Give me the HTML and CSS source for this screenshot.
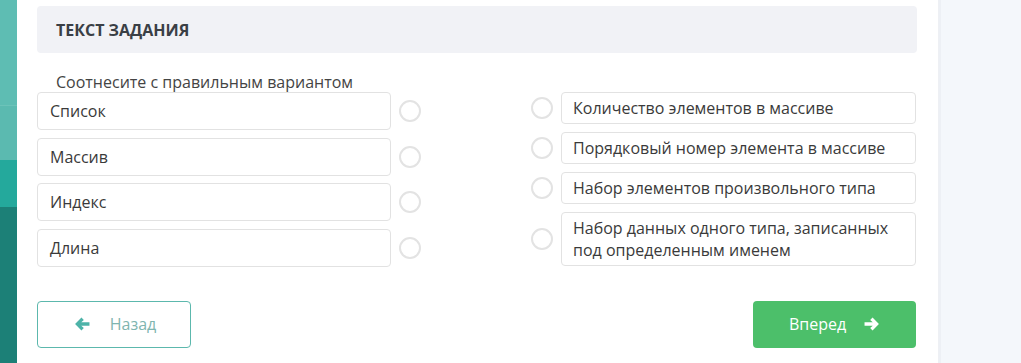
FILE: index.html
```html
<!DOCTYPE html>
<html>
<head>
  <title>Задание</title>
  <link rel="stylesheet" href="styles.css">
</head>
<body>
  <div class="layout">
    <div class="sidebar">
      <div class="side-a"></div>
      <div class="side-b"></div>
      <div class="side-c"></div>
      <div class="side-d"></div>
    </div>

    <div class="card">
      <div class="task-header">ТЕКСТ ЗАДАНИЯ</div>
      <p class="task-text">Соотнесите с правильным вариантом</p>

      <div class="match">
        <div class="col-left">
          <div class="row-left"><div class="item">Список</div><span class="dot"></span></div>
          <div class="row-left"><div class="item">Массив</div><span class="dot"></span></div>
          <div class="row-left"><div class="item">Индекс</div><span class="dot"></span></div>
          <div class="row-left"><div class="item">Длина</div><span class="dot"></span></div>
        </div>
        <div class="col-right">
          <div class="row-right"><span class="dot"></span><div class="answer">Количество элементов в массиве</div></div>
          <div class="row-right"><span class="dot"></span><div class="answer">Порядковый номер элемента в массиве</div></div>
          <div class="row-right"><span class="dot"></span><div class="answer">Набор элементов произвольного типа</div></div>
          <div class="row-right"><span class="dot"></span><div class="answer">Набор данных одного типа, записанных под определенным именем</div></div>
        </div>
      </div>

      <div class="nav">
        <button type="button" class="btn-back">
          <svg width="16" height="14" viewBox="0 0 15 13"><path d="M7 0.5 L1 6.5 L7 12.5 L9.2 10.3 L6.8 8.2 H14.5 V4.8 H6.8 L9.2 2.7 Z" fill="#4db3a8"/></svg>
          <span>Назад</span>
        </button>
        <button type="button" class="btn-next">
          <span>Вперед</span>
          <svg width="16" height="14" viewBox="0 0 15 13"><path d="M8 0.5 L14 6.5 L8 12.5 L5.8 10.3 L8.2 8.2 H0.5 V4.8 H8.2 L5.8 2.7 Z" fill="#fff"/></svg>
        </button>
      </div>
    </div>

    <div class="aside"></div>
  </div>
</body>
</html>
```

FILE: styles.css
```css
body {
  font-family: "Open Sans", "DejaVu Sans", sans-serif;
  margin: 0;
  padding: 0;
  background-color: #f4f7fb;
  color: #333;
}

.layout {
  display: flex;
  height: 363px;
  overflow: hidden;
}

.sidebar {
  width: 17px;
  display: flex;
  flex-direction: column;
}

.side-a {
  height: 105px;
  background-color: #5ebdb3;
  border-bottom: 1px solid #6cc3b9;
}

.side-b {
  height: 54px;
  background-color: #5bbab0;
}

.side-c {
  height: 47px;
  background-color: #24a99c;
}

.side-d {
  flex: 1;
  background-color: #1c8077;
}

.card {
  width: 880px;
  background-color: #fff;
  padding: 6px 21px 0 20px;
  border-right: 1px solid #eef0f4;
}

.task-header {
  background-color: #f1f2f6;
  border-radius: 4px;
  height: 47px;
  line-height: 48px;
  padding-left: 19px;
  font-size: 16px;
  font-weight: 700;
  color: #3a3f45;
}

.task-text {
  margin: 18px 0 0 19px;
  font-size: 16px;
  line-height: 22px;
  color: #444;
}

.match {
  display: flex;
  justify-content: space-between;
  margin-top: -1px;
}

.col-left {
  display: flex;
  flex-direction: column;
  gap: 7.5px;
}

.row-left {
  display: flex;
  align-items: center;
  gap: 8px;
}

.item {
  width: 340px;
  height: 36px;
  line-height: 37px;
  padding-left: 12px;
  border: 1px solid #e2e2e2;
  border-radius: 4px;
  font-size: 16px;
  color: #3a3a3a;
}

.col-right {
  display: flex;
  flex-direction: column;
  gap: 8px;
  width: 385px;
  margin-right: 1px;
}

.row-right {
  display: flex;
  align-items: center;
  gap: 8px;
}

.answer {
  flex: 1;
  padding: 0 11px;
  box-sizing: border-box;
  border: 1px solid #e2e2e2;
  border-radius: 4px;
  font-size: 16px;
  line-height: 22px;
  color: #3a3a3a;
  display: flex;
  align-items: center;
}

.row-right .answer {
  height: 32px;
}

.row-right:last-child .answer {
  height: 54px;
  padding-right: 20px;
}

.dot {
  width: 18px;
  height: 18px;
  border: 2px solid #e3e3e3;
  border-radius: 50%;
  flex: none;
}

.nav {
  display: flex;
  justify-content: space-between;
  margin-top: 34px;
}

button {
  font-family: "Open Sans", "DejaVu Sans", sans-serif;
  font-size: 16px;
  height: 47px;
  border-radius: 4px;
  cursor: pointer;
  display: flex;
  align-items: center;
  justify-content: center;
  gap: 18px;
}

.btn-back {
  width: 154px;
  background-color: #fff;
  border: 1px solid #5cb8ad;
  color: #7fb5b0;
  padding-right: 4px;
  gap: 20px;
}

.btn-next {
  width: 163px;
  margin-right: 1px;
  background-color: #4cbf6a;
  border: none;
  color: #fff;
  padding-left: 6px;
}

.aside {
  flex: 1;
  background-color: #f4f7fb;
  border-left: 2px solid #edf0f5;
}
```
